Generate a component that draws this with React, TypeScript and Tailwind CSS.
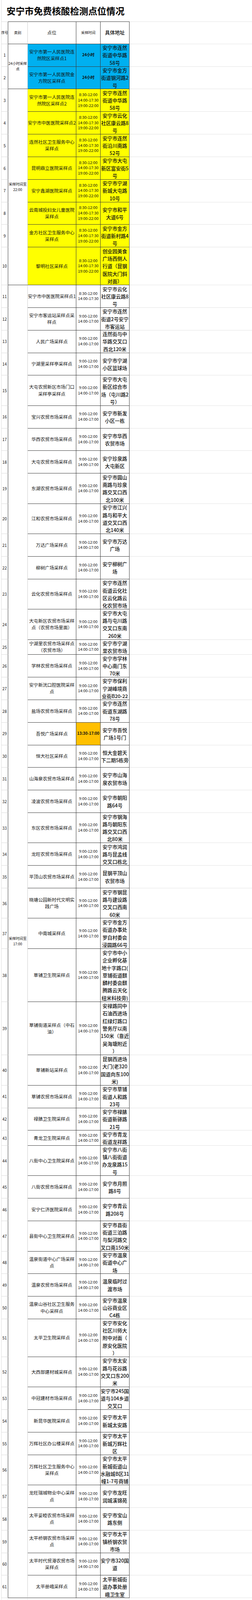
import React from 'react';

type Row = {
  place: string[];
  time: string[];
  addr: string[];
  h: 2 | 3 | 4 | 5 | 7;
  bg?: 'blue' | 'yellow';
  orange?: boolean;
  bold?: boolean;
};

const T3 = ['8:30-12:00', '14:00-17:30', '19:00-22:00'];
const T2 = ['9:00-12:00', '14:00-17:00'];

const rows: Row[] = [
  { place: ['安宁市第一人民医院连', '然院区采样点1'], time: ['24小时'], bold: true, addr: ['安宁市连然', '街道中华路', '58号'], h: 3, bg: 'blue' },
  { place: ['安宁市第一人民医院金', '方院区采样点'], time: ['24小时'], bold: true, addr: ['安宁市金方', '街道钢河路2', '号'], h: 3, bg: 'blue' },
  { place: ['安宁市第一人民医院连', '然院区采样点2'], time: T3, addr: ['安宁市连然', '街道中华路', '58号'], h: 3, bg: 'yellow' },
  { place: ['安宁市中医医院采样点2'], time: T3, addr: ['安宁市云化', '社区康云路8', '号'], h: 3, bg: 'yellow' },
  { place: ['连然社区卫生服务中心', '采样点'], time: T3, addr: ['安宁市连然', '街沿川南路', '52号'], h: 3, bg: 'yellow' },
  { place: ['昆明鼎立医院采样点'], time: T3, addr: ['安宁市大屯', '新区富安街5', '号'], h: 3, bg: 'yellow' },
  { place: ['安宁鑫湖医院采样点'], time: T3, addr: ['安宁市宁湖', '新城大屯路', '10号'], h: 3, bg: 'yellow' },
  { place: ['云南城投妇女儿童医院', '采样点'], time: T3, addr: ['安宁市和平', '大道6号'], h: 3, bg: 'yellow' },
  { place: ['金方社区卫生服务中心', '采样点'], time: T3, addr: ['安宁市金方', '街道新村路4', '号'], h: 3, bg: 'yellow' },
  { place: ['黎明社区采样点'], time: T3, addr: ['创业园美食', '广场西侧人', '行道（昆钢', '医院大门斜', '对面）'], h: 5, bg: 'yellow' },
  { place: ['安宁市中医医院采样点1'], time: ['8:30-12:00', '14:00-17:30'], addr: ['安宁市云化', '社区康云路8', '号'], h: 3 },
  { place: ['安宁市客运站采样点采', '样点'], time: T2, addr: ['安宁市连然', '街道2号安宁', '市客运站'], h: 3 },
  { place: ['人民广场采样点'], time: T2, addr: ['连然街与中', '华路交叉口', '西北120米'], h: 3 },
  { place: ['宁湖里采样亭采样点'], time: T2, addr: ['安宁市宁湖', '小区篮球场'], h: 3 },
  { place: ['大屯农贸新区市场门口', '采样亭采样点'], time: T2, addr: ['安宁市大屯', '新区综合市', '场（屯川路2', '号）'], h: 4 },
  { place: ['宝兴农贸市场采样点'], time: T2, addr: ['安宁市新发', '小区一栋'], h: 3 },
  { place: ['华西农贸市场采样点'], time: T2, addr: ['安宁市华西', '农贸市场'], h: 3 },
  { place: ['大屯农贸市场采样点'], time: T2, addr: ['安宁珍泉路', '大屯新区'], h: 3 },
  { place: ['东湖农贸市场采样点'], time: T2, addr: ['安宁市圆山', '南路与珍泉', '路交叉口西', '北100米'], h: 4 },
  { place: ['江和农贸市场采样点'], time: T2, addr: ['安宁市江兴', '路与和平大', '道交叉口西', '北140米'], h: 4 },
  { place: ['万达广场采样点'], time: T2, addr: ['安宁市万达', '广场'], h: 3 },
  { place: ['柳树广场采样点'], time: T2, addr: ['安宁柳树广', '场'], h: 3 },
  { place: ['云化农贸市场采样点'], time: T2, addr: ['安宁市连然', '街道云化社', '区云化路云', '化农贸市场'], h: 4 },
  { place: ['大屯新区农贸市场采样', '点（农贸市场里面）'], time: T2, addr: ['安宁市大屯', '路与屯川路', '交叉口东南', '260米'], h: 4 },
  { place: ['宁湖里农贸市场采样点', '（农贸市场）'], time: T2, addr: ['安宁市宁湖', '里农贸市场'], h: 2 },
  { place: ['学林农贸市场采样点'], time: T2, addr: ['安宁市学林', '中心南门东', '70米'], h: 3 },
  { place: ['安宁新洸口腔医院采样', '点'], time: T2, addr: ['安宁市保利', '宁湖峰境商', '业街B20-22'], h: 3 },
  { place: ['盐场农贸市场采样点'], time: T2, addr: ['安宁市连然', '街道东湖路', '78号'], h: 3 },
  { place: ['吾悦广场采样点'], time: ['13:30-17:00'], orange: true, bold: true, addr: ['安宁市吾悦', '广场1号门'], h: 3 },
  { place: ['恒大社区采样点'], time: T2, addr: ['恒大金碧天', '下二期5栋旁'], h: 3 },
  { place: ['山海泉农贸市场采样点'], time: T2, addr: ['安宁市山海', '泉农贸市场'], h: 3 },
  { place: ['凌波农贸市场采样点'], time: T2, addr: ['安宁市朝阳', '路64号'], h: 3 },
  { place: ['东区农贸市场采样点'], time: T2, addr: ['安宁市钢海', '路与朝阳东', '路交叉口西', '北80米'], h: 4 },
  { place: ['龙旺农贸市场采样点'], time: T2, addr: ['安宁市鸿润', '路与昆孟线', '交叉口栋北'], h: 3 },
  { place: ['平顶山农贸市场采样点'], time: T2, addr: ['昆钢平顶山', '农贸市场'], h: 3 },
  { place: ['晓塘公园新时代文明实', '践广场'], time: T2, addr: ['安宁市钢昆', '路与建设路', '交叉口西南', '60米'], h: 4 },
  { place: ['中南城采样点'], time: T2, addr: ['安宁市金方', '街道办事处', '罗白村委会', '浸圆路66号'], h: 4 },
  { place: ['草铺卫生院采样点'], time: T2, addr: ['安宁市中小', '企业孵化基', '地十字路口(', '草铺街道麒', '麟村委会麒', '腾路云天化', '纽米科技旁)'], h: 7 },
  { place: ['草铺街道采样点（中石', '油）'], time: T2, addr: ['安禄路同中', '石油西进场', '红绿灯路口', '警务厅以南', '150米（靠近', '吴海塘附近', '）'], h: 7 },
  { place: ['草铺新站采样点'], time: T2, addr: ['昆钢西进场', '大门(老320', '国道向东100', '米)'], h: 4 },
  { place: ['草铺农贸市场采样点'], time: T2, addr: ['安宁市草铺', '街道人和路', '23号'], h: 3 },
  { place: ['禄脿卫生院采样点'], time: T2, addr: ['安宁市禄脿', '街道新驿路', '21号'], h: 3 },
  { place: ['青龙卫生院采样点'], time: T2, addr: ['安宁市青龙', '街道龙祥路'], h: 2 },
  { place: ['八街中心卫生院采样点'], time: T2, addr: ['安宁市八街', '镇八街街道', '办龙泉路15', '号'], h: 4 },
  { place: ['八街农贸市场采样点'], time: T2, addr: ['安宁市月照', '路8号'], h: 3 },
  { place: ['安宁仁济医院采样点'], time: T2, addr: ['安宁市青云', '路208号'], h: 3 },
  { place: ['县街中心卫生院采样点'], time: T2, addr: ['安宁市县街', '街道三泊路', '与梨河路交', '叉口南150米'], h: 4 },
  { place: ['温泉街道中心广场采样', '点'], time: T2, addr: ['安宁市温泉', '街道中心广', '场'], h: 3 },
  { place: ['温泉农贸市场采样点'], time: T2, addr: ['温泉临时过', '渡市场'], h: 3 },
  { place: ['温泉山谷社区卫生服务', '中心采样点'], time: T2, addr: ['安宁市温泉', '山谷商业区', 'C4栋'], h: 3 },
  { place: ['太平卫生院采样点'], time: T2, addr: ['安宁市安化', '社区川师大', '附中对面（', '原安化医院', '）'], h: 5 },
  { place: ['大西部建材城采样点'], time: T2, addr: ['安宁市太安', '路与花谷路', '交叉口东200', '米'], h: 4 },
  { place: ['中冠建材市场采样点'], time: T2, addr: ['安宁市245国', '道与104乡道', '交叉口'], h: 3 },
  { place: ['新昆华医院采样点'], time: T2, addr: ['安宁市太平', '新城太安路'], h: 3 },
  { place: ['万辉社区办公楼采样点'], time: T2, addr: ['安宁市太平', '新城万辉社', '区'], h: 3 },
  { place: ['万辉社区卫生服务中心', '采样点'], time: T2, addr: ['安宁市太平', '新城街道山', '水融城B区31', '幢1-7号商铺'], h: 4 },
  { place: ['龙旺瑞城物业中心采样', '点'], time: T2, addr: ['安宁市龙旺', '润城溪锦苑'], h: 3 },
  { place: ['太平妥睦农贸市场采样', '点'], time: T2, addr: ['安宁市宝山', '路东侧'], h: 3 },
  { place: ['太平桥钢农贸市场采样', '点'], time: T2, addr: ['安宁市太平', '镇桥钢农贸', '市场'], h: 3 },
  { place: ['太平时代贸港农贸市场', '采样点'], time: T2, addr: ['安宁市320国', '道'], h: 3 },
  { place: ['太平册峨采样点'], time: T2, addr: ['太平新城街', '道办事处册', '峨卫生室'], h: 3 },
];

const H: Record<number, string> = {
  2: 'h-[38.67px]',
  3: 'h-[57.84px]',
  4: 'h-[77.41px]',
  5: 'h-[96.88px]',
  7: 'h-[136.24px]',
};

const CATS: Record<number, { span: string; lines: string[] }> = {
  0: { span: 'row-span-2', lines: ['24小时采样', '点'] },
  2: { span: 'row-span-8', lines: ['采样时间至', '22:00'] },
  10: { span: 'row-span-51', lines: ['采样时间至', '17:00'] },
};

function Lines({ lines }: { lines: string[] }) {
  return (
    <>
      {lines.map((l, k) => (
        <div key={k} className="whitespace-nowrap">
          {l}
        </div>
      ))}
    </>
  );
}

export default function App() {
  return (
    <div className="w-full bg-white text-[#111] font-['Noto_Sans_CJK_SC','Noto_Sans',sans-serif]">
      {/* Title */}
      <div className="ml-[2.7px] w-[328.5px] h-[54.66px] border-l border-[#dcdcdc] flex items-center justify-center">
        <h1 className="text-[23.2px] font-bold leading-none whitespace-nowrap text-black">安宁市免费核酸检测点位情况</h1>
      </div>

      <div className="pl-[2.7px] grid grid-cols-[18.25px_49.6px_124.8px_61.5px_74.3px_1fr]">
        {/* Header */}
        <div className="h-[58.07px] border-l border-t border-r border-b border-l-[#dcdcdc] border-t-[#dcdcdc] border-r-[#3a3a3a] border-b-[#dcdcdc] flex items-center justify-center text-[8.9px] whitespace-nowrap">
          序号
        </div>
        <div className="h-[58.07px] border-t border-r border-b border-t-[#3a3a3a] border-r-[#cfcfcf] border-b-[#3a3a3a] flex items-center justify-center text-[9.2px]">
          类别
        </div>
        <div className="h-[58.07px] border-t border-r border-b border-[#3a3a3a] flex items-center justify-center text-[11.6px]">
          点位
        </div>
        <div className="h-[58.07px] border-t border-r border-b border-[#3a3a3a] flex items-center justify-center text-[9.2px]">
          采样时间
        </div>
        <div className="h-[58.07px] border-t border-r border-b border-[#3a3a3a] flex items-center justify-center text-[12.6px] font-medium">
          具体地址
        </div>
        <div className="h-[58.07px] border-t border-b border-[#e3e3e3]" />

        {rows.map((r, i) => {
          const h = H[r.h];
          const bg = r.bg === 'blue' ? 'bg-[#00b0f0]' : r.bg === 'yellow' ? 'bg-[#ffff00]' : 'bg-white';
          const tbg = r.orange ? 'bg-[#ffc000]' : bg;
          const cat = CATS[i];
          return (
            <React.Fragment key={i}>
              <div className={`${h} border-l border-r border-b border-l-[#dcdcdc] border-r-[#3a3a3a] border-b-[#dcdcdc] flex items-center justify-center text-[10.25px]`}>
                {i + 1}
              </div>
              {cat && (
                <div className={`${cat.span} border-r border-b border-r-[#cfcfcf] border-b-[#3a3a3a] flex flex-col items-center justify-center text-[9.2px] leading-[13.7px]`}>
                  <Lines lines={cat.lines} />
                </div>
              )}
              <div className={`${h} ${bg} border-r border-b border-[#3a3a3a] flex flex-col items-center justify-center text-center text-[11.6px] leading-[17.1px]`}>
                <Lines lines={r.place} />
              </div>
              <div className={`${h} ${tbg} border-r border-b border-[#3a3a3a] flex flex-col items-center justify-center text-center text-[9.9px] leading-[13.7px] ${r.bold ? 'font-bold' : ''}`}>
                <Lines lines={r.time} />
              </div>
              <div className={`${h} ${bg} border-r border-b border-[#3a3a3a] flex flex-col items-center justify-center text-center text-[12.6px] leading-[19.3px] font-medium`}>
                <Lines lines={r.addr} />
              </div>
              <div className={`${h} border-b border-[#e3e3e3]`} />
            </React.Fragment>
          );
        })}

        {/* trailing empty spreadsheet row */}
        <div className="h-[8px] border-l border-r border-[#e3e3e3]" />
        <div className="h-[8px] border-r border-[#e3e3e3]" />
        <div className="h-[8px] border-r border-[#e3e3e3]" />
        <div className="h-[8px] border-r border-[#e3e3e3]" />
        <div className="h-[8px] border-r border-[#e3e3e3]" />
        <div className="h-[8px]" />
      </div>
    </div>
  );
}
